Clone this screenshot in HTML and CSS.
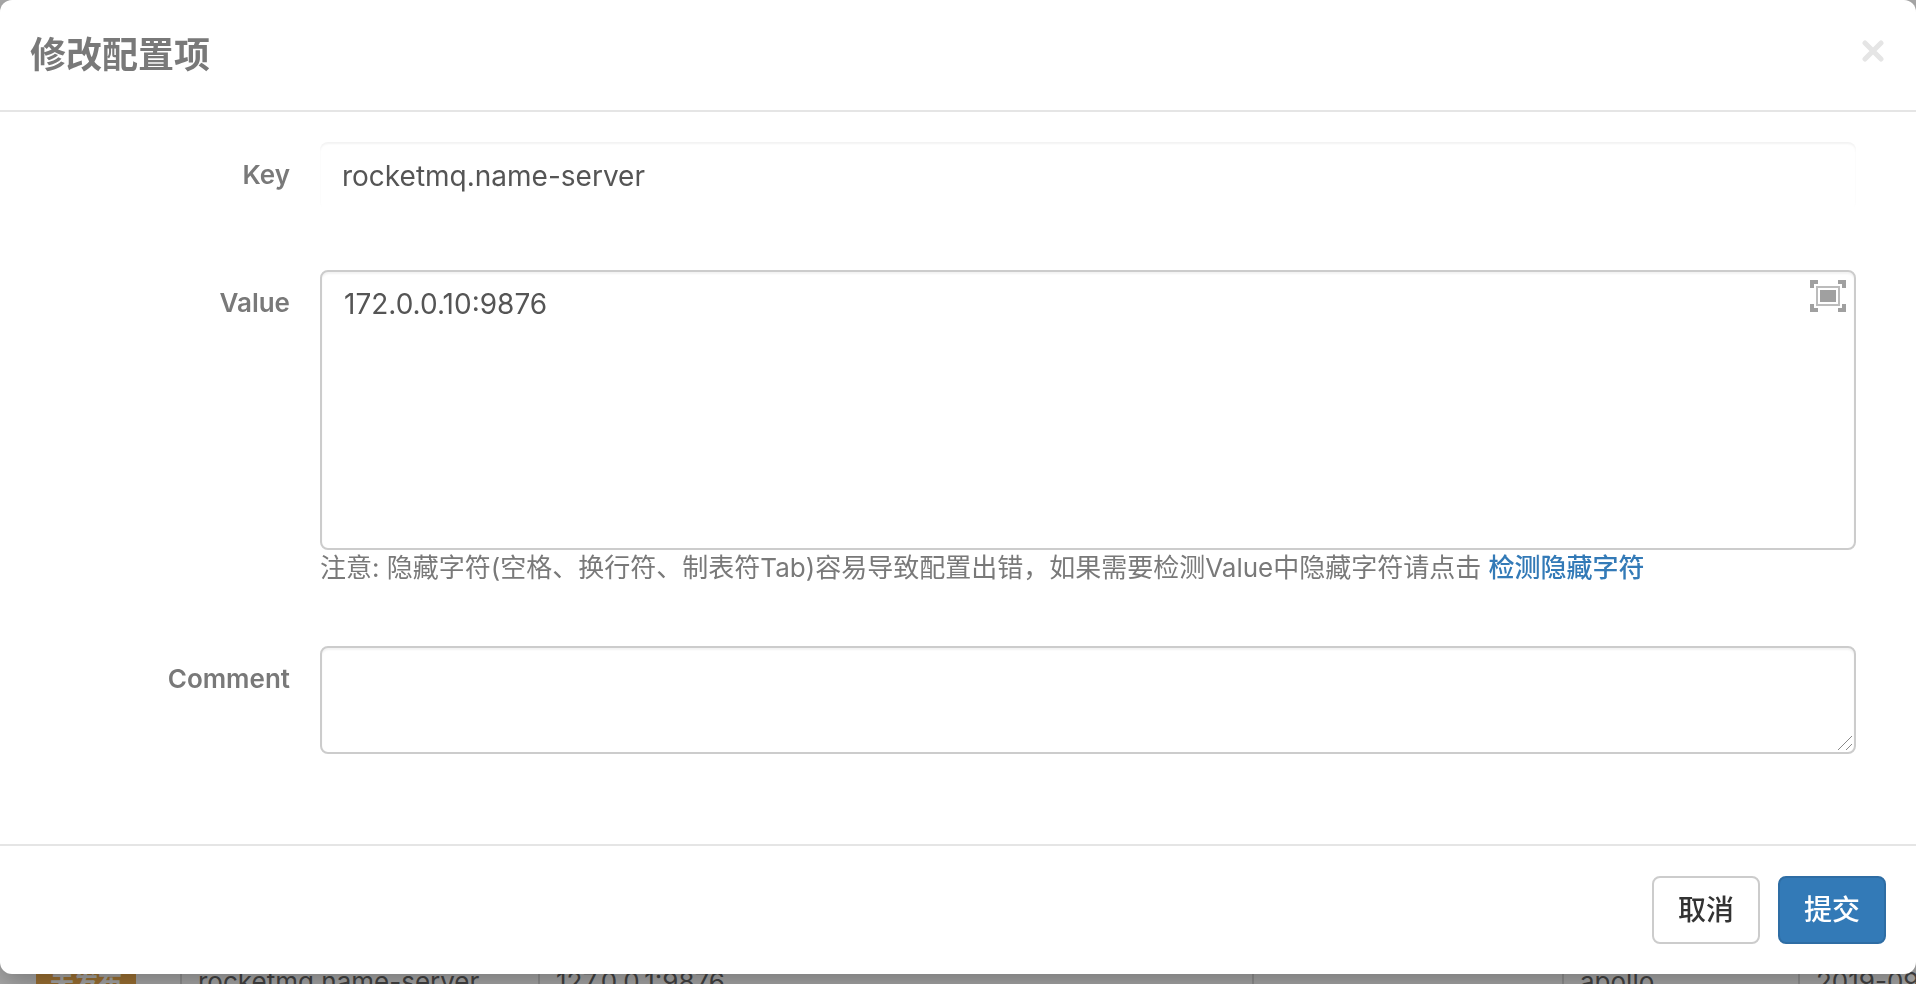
FILE: index.html
```html
<!DOCTYPE html>
<html lang="zh-CN">
  <head>
    <meta charset="UTF-8" />
    <meta name="viewport" content="width=device-width, initial-scale=1.0" />
    <title>修改配置项</title>
    <link rel="stylesheet" href="styles.css">
  </head>
  <body>
    <main class="page">
      <table class="items">
        <colgroup>
          <col class="col-status">
          <col class="col-key">
          <col class="col-value">
          <col class="col-comment">
          <col class="col-user">
          <col class="col-time">
        </colgroup>
        <tr>
          <td><span class="tag">未发布</span></td>
          <td>rocketmq.name-server</td>
          <td>127.0.0.1:9876</td>
          <td></td>
          <td>apollo</td>
          <td>2019-09</td>
        </tr>
      </table>
    </main>

    <div class="backdrop"></div>

    <form class="modal" role="dialog" aria-labelledby="modalTitle">
      <div class="modal-header">
        <h4 class="modal-title" id="modalTitle">修改配置项</h4>
        <button type="button" class="close" aria-label="Close">
          <svg width="24" height="24" viewBox="0 0 24 24">
            <path d="M3 4L19 20M19 4L3 20" />
          </svg>
        </button>
      </div>

      <div class="modal-body">
        <div class="form-group">
          <label for="key">Key</label>
          <div class="field">
            <input type="text" id="key" class="form-control plain" value="rocketmq.name-server" readonly>
          </div>
        </div>

        <div class="form-group">
          <label for="value">Value</label>
          <div class="field">
            <textarea id="value" class="form-control value-text">172.0.0.10:9876</textarea>
            <button type="button" class="expand" aria-label="全屏">
              <svg width="36" height="32" viewBox="0 0 36 32">
                <path d="M0 0h8v4H4v4H0zM28 0h8v8h-4V4h-4zM0 24h4v4h4v4H0zM32 24h4v8h-8v-4h4zM10 10h16v12H10z" />
                <path class="frame" d="M7 7h22v18H7z" />
              </svg>
            </button>
            <div class="help">
              注意: 隐藏字符(空格、换行符、制表符Tab)容易导致配置出错，如果需要检测Value中隐藏字符请点击
              <a href="#">检测隐藏字符</a>
            </div>
          </div>
        </div>

        <div class="form-group">
          <label for="comment">Comment</label>
          <div class="field">
            <textarea id="comment" class="form-control comment-text"></textarea>
            <svg class="grip" width="16" height="16" viewBox="0 0 16 16">
              <path d="M1 15L15 1M9 15L15 9" />
            </svg>
          </div>
        </div>
      </div>

      <div class="modal-footer">
        <button type="button" class="btn">取消</button>
        <button type="submit" class="btn btn-primary">提交</button>
      </div>
    </form>
  </body>
</html>
```
FILE: styles.css
```css
:root {
  --text-color: #797979;
  --input-color: #555;
  --border-color: #ccc;
  --line-color: #e5e5e5;
  --primary-color: #337ab7;
}

* {
  box-sizing: border-box;
}

body {
  font-family: Inter, "Noto Sans CJK SC", sans-serif;
  font-size: 26px;
  line-height: 36px;
  margin: 0;
  height: 100vh;
  overflow: hidden;
  color: var(--text-color);
  background: #fff;
}

/* config list behind the dialog */
.page {
  padding-top: 944px;
}

.items {
  width: 100%;
  table-layout: fixed;
  border-collapse: collapse;
}

.items td {
  height: 76px;
  padding: 0 16px;
  border-left: 2px solid #ddd;
  color: #666;
  white-space: nowrap;
}

.items td:first-child {
  padding-left: 36px;
  border-left: none;
}

.col-status {
  width: 181px;
}

.col-key {
  width: 358px;
}

.col-comment {
  width: 310px;
}

.col-user {
  width: 236px;
}

.col-time {
  width: 117px;
}

.items .tag {
  display: inline-block;
  padding: 0 14px;
  background: #f0ad4e;
  color: #fff;
  font-size: 24px;
  font-weight: bold;
}

.backdrop {
  position: fixed;
  inset: 0;
  background: rgba(0, 0, 0, 0.33);
}

.modal {
  position: fixed;
  top: 0;
  left: 0;
  right: 0;
  background: #fff;
  border-radius: 12px;
  box-shadow: 0 10px 30px rgba(0, 0, 0, 0.3);
}

.modal-header {
  display: flex;
  justify-content: space-between;
  align-items: flex-start;
  padding: 30px;
  border-bottom: 2px solid var(--line-color);
}

.modal-title {
  margin: 0;
  font-size: 36px;
  line-height: 50px;
}

.close,
.expand {
  display: block;
  padding: 0;
  border: none;
  background: none;
  cursor: pointer;
}

.close {
  margin-top: 9px;
}

.close path {
  stroke: #e5e5e5;
  stroke-width: 5;
  stroke-linecap: round;
}

.modal-body {
  display: flex;
  flex-direction: column;
  gap: 60px;
  padding: 30px 60px 90px 0;
}

.form-group {
  display: grid;
  grid-template-columns: 290px 1fr;
  column-gap: 30px;
}

label {
  padding-top: 15px;
  text-align: right;
  font-weight: 600;
}

.field {
  position: relative;
}

.form-control {
  display: block;
  width: 100%;
  padding: 12px 22px;
  border: 2px solid var(--border-color);
  border-radius: 8px;
  background: #fff;
  box-shadow: inset 0 2px 2px rgba(0, 0, 0, 0.05);
  color: var(--input-color);
  font-family: inherit;
  font-size: 28px;
  line-height: 40px;
  resize: none;
}

.plain {
  height: 68px;
  border: none;
}

.value-text {
  height: 280px;
}

.comment-text {
  height: 108px;
}

.expand {
  position: absolute;
  top: 10px;
  right: 10px;
}

.expand path {
  fill: #a0a0a0;
}

.expand .frame {
  fill: none;
  stroke: #bcbcbc;
  stroke-width: 2;
}

.grip {
  position: absolute;
  right: 3px;
  bottom: 3px;
}

.grip path {
  stroke: #888;
  stroke-width: 1;
}

a {
  color: var(--primary-color);
  font-weight: 500;
  text-decoration: none;
}

.modal-footer {
  display: flex;
  justify-content: flex-end;
  gap: 18px;
  padding: 30px;
  border-top: 2px solid var(--line-color);
}

.btn {
  height: 68px;
  padding: 0 24px;
  border: 2px solid var(--border-color);
  border-radius: 8px;
  background: #fff;
  color: #333;
  font-family: inherit;
  font-size: 28px;
  font-weight: 500;
  line-height: 40px;
  cursor: pointer;
}

.btn-primary {
  border-color: #2e6da4;
  background: var(--primary-color);
  color: #fff;
}
```
